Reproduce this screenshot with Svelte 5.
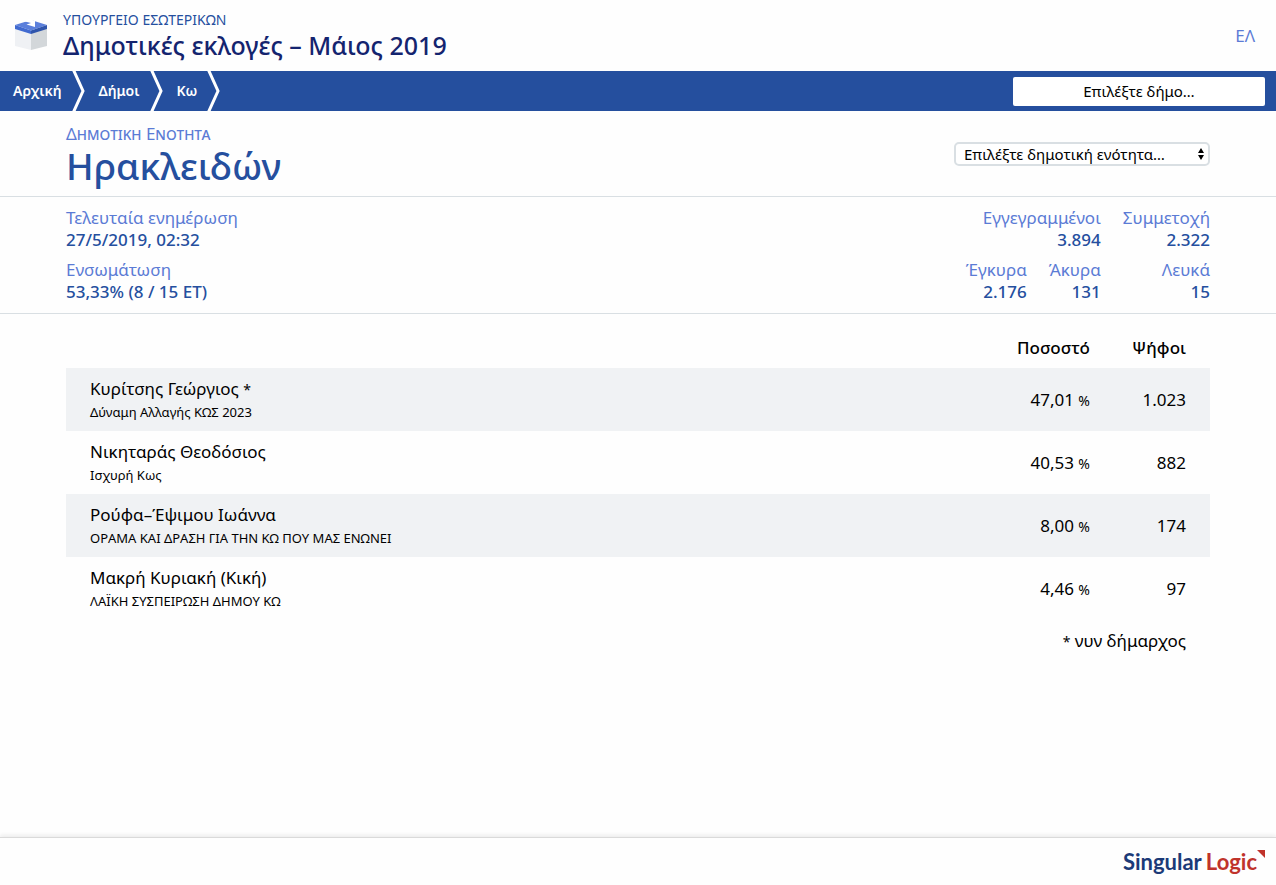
<!--
  App.svelte — Municipal unit results page.
  Header, breadcrumb bar, unit summary and the table of candidates.
-->
<script lang="ts">
  interface Stat {
    label: string;
    value: string;
    wide?: boolean;
  }

  interface Candidate {
    name: string;
    incumbent?: boolean;
    party: string;
    percent: string;
    votes: string;
  }

  const crumbs = ['Αρχική', 'Δήμοι', 'Κω'];

  const progress: Stat[] = [
    { label: 'Τελευταία ενημέρωση', value: '27/5/2019, 02:32' },
    { label: 'Ενσωμάτωση', value: '53,33% (8 / 15 ΕΤ)' }
  ];

  const turnout: Stat[] = [
    { label: 'Εγγεγραμμένοι', value: '3.894', wide: true },
    { label: 'Συμμετοχή', value: '2.322' },
    { label: 'Έγκυρα', value: '2.176' },
    { label: 'Άκυρα', value: '131' },
    { label: 'Λευκά', value: '15' }
  ];

  const candidates: Candidate[] = [
    { name: 'Κυρίτσης Γεώργιος', incumbent: true, party: 'Δύναμη Αλλαγής ΚΩΣ 2023', percent: '47,01', votes: '1.023' },
    { name: 'Νικηταράς Θεοδόσιος', party: 'Ισχυρή Κως', percent: '40,53', votes: '882' },
    { name: 'Ρούφα–Έψιμου Ιωάννα', party: 'ΟΡΑΜΑ ΚΑΙ ΔΡΑΣΗ ΓΙΑ ΤΗΝ ΚΩ ΠΟΥ ΜΑΣ ΕΝΩΝΕΙ', percent: '8,00', votes: '174' },
    { name: 'Μακρή Κυριακή (Κική)', party: 'ΛΑΪΚΗ ΣΥΣΠΕΙΡΩΣΗ ΔΗΜΟΥ ΚΩ', percent: '4,46', votes: '97' }
  ];
</script>

<div class="page" lang="el">
  <header class="masthead">
    <svg class="ballot" viewBox="0 0 34 34" aria-hidden="true">
      <path d="M1 11 17 16V33L1 29Z" fill="#eff1f4" />
      <path d="M33 11 17 16V33L33 29Z" fill="#d3d7da" />
      <path d="M1 8 17 3 33 8 17 13.500Z" fill="#5b7fdb" />
      <path d="M1 8 17 13.500V17L1 12Z" fill="#416ad0" />
      <path d="M33 8 17 13.500V17L33 12Z" fill="#2f55ac" />
      <path d="M9 4 16 2 21 4V10L12.500 7.500 17 6Z" fill="#fff" />
    </svg>
    <div class="titles">
      <p class="ministry">ΥΠΟΥΡΓΕΙΟ ΕΣΩΤΕΡΙΚΩΝ</p>
      <h1>Δημοτικές εκλογές – Μάιος 2019</h1>
    </div>
    <a class="lang" href="#el">ΕΛ</a>
  </header>

  <div class="bar">
    <nav aria-label="Διαδρομή">
      {#each crumbs as crumb}
        <a class="crumb" href="#{crumb}">{crumb}</a>
        <svg class="chevron" viewBox="0 0 14 40" aria-hidden="true">
          <path d="M1.500 -1 11 20 1.500 41" fill="none" stroke="#fff" stroke-width="3" />
        </svg>
      {/each}
    </nav>
    <select class="municipality" aria-label="Δήμος">
      <option>Επιλέξτε δήμο…</option>
    </select>
  </div>

  <main>
    <section class="unit">
      <div>
        <p class="kind">Δημοτικη Ενοτητα</p>
        <h2>Ηρακλειδών</h2>
      </div>
      <div class="unit-picker">
        <select aria-label="Δημοτική ενότητα">
          <option>Επιλέξτε δημοτική ενότητα…</option>
        </select>
        <svg viewBox="0 0 6 12" aria-hidden="true">
          <path d="M0 5 3 0 6 5ZM0 7 3 12 6 7Z" />
        </svg>
      </div>
    </section>

    <section class="summary">
      <dl class="progress">
        {#each progress as stat}
          <div>
            <dt>{stat.label}</dt>
            <dd>{stat.value}</dd>
          </div>
        {/each}
      </dl>
      <dl class="turnout">
        {#each turnout as stat}
          <div class:wide={stat.wide}>
            <dt>{stat.label}</dt>
            <dd>{stat.value}</dd>
          </div>
        {/each}
      </dl>
    </section>

    <section class="results">
      <table>
        <thead>
          <tr>
            <td></td>
            <th class="percent" scope="col">Ποσοστό</th>
            <th class="votes" scope="col">Ψήφοι</th>
          </tr>
        </thead>
        <tbody>
          {#each candidates as candidate}
            <tr>
              <td class="candidate">
                <div>{candidate.name}{#if candidate.incumbent}{' '}<small>*</small>{/if}</div>
                <div class="party">{candidate.party}</div>
              </td>
              <td class="percent">{candidate.percent} <small>%</small></td>
              <td class="votes">{candidate.votes}</td>
            </tr>
          {/each}
        </tbody>
      </table>
      <p class="note"><small>*</small> νυν δήμαρχος</p>
    </section>
  </main>

  <footer>
    <a class="vendor" href="#singularlogic" aria-label="SingularLogic">
      <span class="singular">Singular</span><span class="logic">Logic</span>
      <svg viewBox="0 0 8 8" aria-hidden="true"><path d="M0 0H8V8Z" fill="#c0332b" /></svg>
    </a>
  </footer>
</div>

<style>
  :global(body) {
    margin: 0;
    background: #fefefe;
  }

  .page {
    --blue: #254f9e;
    --light-blue: #5b7bd5;
    --navy: #14246f;
    --line: #d9dfe3;
    display: flex;
    flex-direction: column;
    min-height: 100vh;
    font-family: 'Noto Sans', 'Open Sans', sans-serif;
    font-size: 17px;
    line-height: 22px;
    color: #000;
  }

  p,
  h1,
  h2,
  dl,
  dd {
    margin: 0;
  }

  a {
    text-decoration: none;
  }

  small {
    font-size: 14px;
    line-height: 1;
  }

  .masthead {
    display: flex;
    align-items: center;
    height: 71px;
    padding: 0 21px 0 14px;
  }

  .ballot {
    width: 34px;
    height: 34px;
    margin: 0 15px 4px 0;
  }

  .titles {
    flex: 1;
    padding-bottom: 2px;
  }

  .ministry {
    font-size: 14px;
    line-height: 20px;
    color: var(--blue);
  }

  h1 {
    font-size: 25px;
    line-height: 30px;
    font-weight: 500;
    color: var(--navy);
  }

  .lang {
    color: var(--light-blue);
  }

  .bar {
    display: flex;
    align-items: center;
    justify-content: space-between;
    height: 40px;
    padding-right: 11px;
    background: var(--blue);
  }

  nav {
    display: flex;
    align-items: center;
  }

  .crumb {
    padding: 0 10px 0 13px;
    font-size: 14px;
    font-weight: 600;
    color: #fff;
  }

  .chevron {
    width: 14px;
    height: 40px;
  }

  select {
    appearance: none;
    box-sizing: border-box;
    font-family: inherit;
    font-size: 15px;
    color: #000;
    background: #fff;
  }

  .municipality {
    width: 252px;
    height: 29px;
    border: 0;
    border-radius: 2px;
    text-align: center;
    text-align-last: center;
  }

  .unit,
  .summary {
    display: flex;
    justify-content: space-between;
    padding: 0 66px;
    border-bottom: 1px solid var(--line);
  }

  .unit {
    align-items: center;
    height: 85px;
  }

  .kind {
    font-size: 17px;
    line-height: 24px;
    font-variant: small-caps;
    color: var(--light-blue);
  }

  h2 {
    font-size: 37px;
    line-height: 40px;
    font-weight: 500;
    color: var(--blue);
  }

  .unit-picker {
    position: relative;
    display: flex;
  }

  .unit-picker select {
    width: 256px;
    height: 24px;
    padding: 0 8px;
    border: 2px solid var(--line);
    border-radius: 5px;
  }

  .unit-picker svg {
    position: absolute;
    top: 6px;
    right: 6px;
    width: 6px;
    height: 12px;
    pointer-events: none;
  }

  .summary {
    padding-top: 10px;
    padding-bottom: 10px;
  }

  .progress {
    display: grid;
    gap: 8px;
  }

  .turnout {
    display: grid;
    grid-template-columns: repeat(3, auto);
    gap: 8px 22px;
    text-align: right;
  }

  .wide {
    grid-column: span 2;
  }

  dt {
    color: var(--light-blue);
  }

  dd {
    font-weight: 500;
    color: var(--blue);
  }

  .results {
    padding: 14px 66px;
  }

  table {
    width: 100%;
    border-collapse: collapse;
  }

  thead tr {
    height: 40px;
  }

  tbody tr {
    height: 63px;
  }

  tbody tr:nth-child(odd) {
    background: #f0f2f4;
  }

  td,
  th {
    padding: 0 24px;
    font-weight: 400;
  }

  th {
    font-weight: 500;
  }

  .candidate {
    padding-top: 3px;
  }

  .percent,
  .votes {
    padding-left: 0;
    text-align: right;
    white-space: nowrap;
  }

  .votes {
    width: 72px;
  }

  .party {
    font-size: 13px;
    line-height: 24px;
  }

  .note {
    padding: 10px 24px;
    text-align: right;
  }

  footer {
    display: flex;
    align-items: center;
    justify-content: flex-end;
    height: 47px;
    margin-top: auto;
    padding-right: 11px;
    border-top: 1px solid #dadada;
    box-shadow: 0 -2px 4px #ececec;
  }

  .vendor {
    display: flex;
    font-family: Lato, sans-serif;
    font-size: 22px;
    line-height: 24px;
    font-weight: 700;
  }

  .singular {
    margin-right: 4px;
    color: #1c3a78;
  }

  .logic {
    color: #c0332b;
  }

  .vendor svg {
    width: 8px;
    height: 8px;
  }
</style>
